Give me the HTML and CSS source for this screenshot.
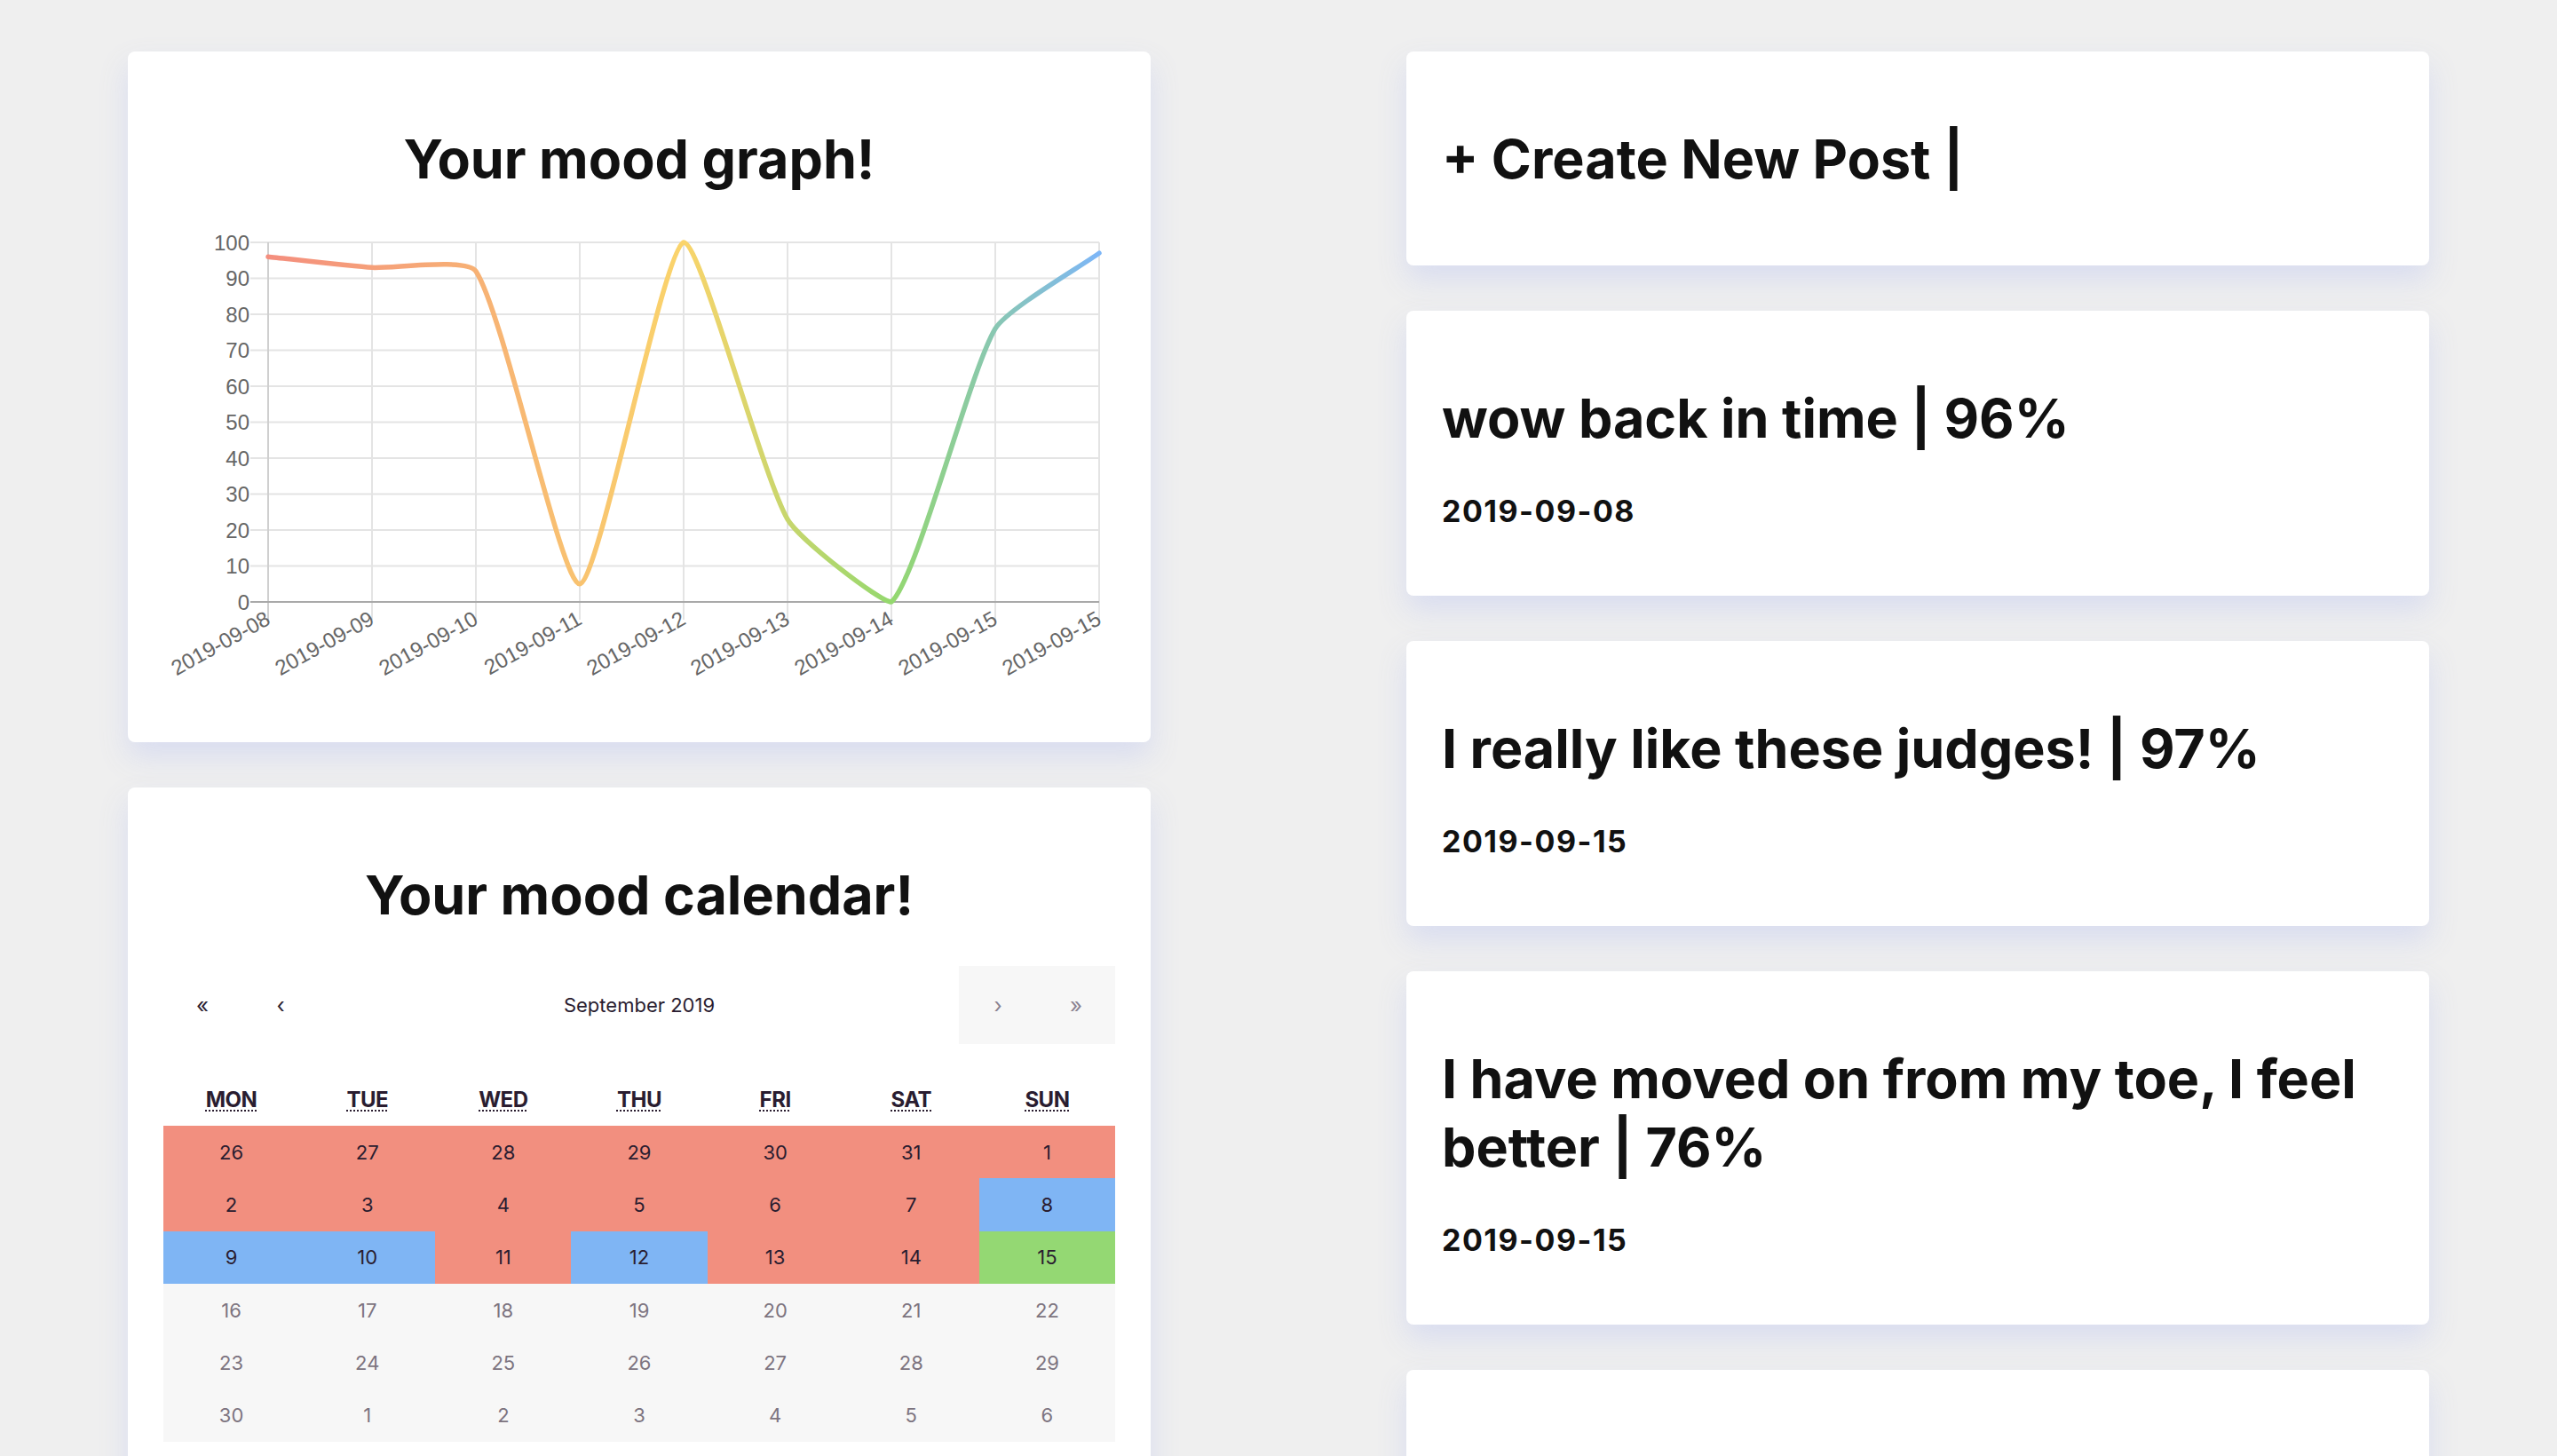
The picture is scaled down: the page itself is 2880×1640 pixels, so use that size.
FILE: index.html
```html
<!DOCTYPE html>
<html lang="en">
<head>
<meta charset="utf-8">
<title>Mood Journal</title>
<link rel="stylesheet" href="styles.css">
</head>
<body>
<main class="page">
  <section class="column">
    <div class="card chart-card">
      <h1 class="card-title centered">Your mood graph!</h1>
      <svg class="chart" width="1072" height="540" viewBox="0 0 1072 540">
        <defs>
          <linearGradient id="moodGrad" gradientUnits="userSpaceOnUse" x1="118" y1="0" x2="1054" y2="0">
            <stop offset="0" stop-color="#f48e7e"/>
            <stop offset="0.5" stop-color="#fad46b"/>
            <stop offset="0.75" stop-color="#94d86e"/>
            <stop offset="1" stop-color="#7db6f7"/>
          </linearGradient>
        </defs>
        <g class="grid">
          <line x1="98" y1="20" x2="1054" y2="20"/>
          <line x1="98" y1="60.5" x2="1054" y2="60.5"/>
          <line x1="98" y1="101" x2="1054" y2="101"/>
          <line x1="98" y1="141.5" x2="1054" y2="141.5"/>
          <line x1="98" y1="182" x2="1054" y2="182"/>
          <line x1="98" y1="222.5" x2="1054" y2="222.5"/>
          <line x1="98" y1="263" x2="1054" y2="263"/>
          <line x1="98" y1="303.5" x2="1054" y2="303.5"/>
          <line x1="98" y1="344" x2="1054" y2="344"/>
          <line x1="98" y1="384.5" x2="1054" y2="384.5"/>
          <line x1="235" y1="20" x2="235" y2="445"/>
          <line x1="352" y1="20" x2="352" y2="445"/>
          <line x1="469" y1="20" x2="469" y2="445"/>
          <line x1="586" y1="20" x2="586" y2="445"/>
          <line x1="703" y1="20" x2="703" y2="445"/>
          <line x1="820" y1="20" x2="820" y2="445"/>
          <line x1="937" y1="20" x2="937" y2="445"/>
          <line x1="1054" y1="20" x2="1054" y2="445"/>
        </g>
        <line class="axis-y" x1="118" y1="20" x2="118" y2="445"/>
        <line class="axis-zero" x1="98" y1="425" x2="1054" y2="425"/>
        <g class="y-labels">
          <text x="97" y="28.5">100</text>
          <text x="97" y="69">90</text>
          <text x="97" y="109.5">80</text>
          <text x="97" y="150">70</text>
          <text x="97" y="190.5">60</text>
          <text x="97" y="231">50</text>
          <text x="97" y="271.5">40</text>
          <text x="97" y="312">30</text>
          <text x="97" y="352.5">20</text>
          <text x="97" y="393">10</text>
          <text x="97" y="433.5">0</text>
        </g>
        <g class="x-labels">
          <text transform="translate(122 449) rotate(-29)">2019-09-08</text>
          <text transform="translate(239 449) rotate(-29)">2019-09-09</text>
          <text transform="translate(356 449) rotate(-29)">2019-09-10</text>
          <text transform="translate(473 449) rotate(-29)">2019-09-11</text>
          <text transform="translate(590 449) rotate(-29)">2019-09-12</text>
          <text transform="translate(707 449) rotate(-29)">2019-09-13</text>
          <text transform="translate(824 449) rotate(-29)">2019-09-14</text>
          <text transform="translate(941 449) rotate(-29)">2019-09-15</text>
          <text transform="translate(1058 449) rotate(-29)">2019-09-15</text>
        </g>
        <path class="mood-line" d="M118,36.2 C139.06,38.39 213.89,46.89 235,48.35 C256.01,49.8 341.9,37.02 352,52.4 C384.02,101.17 448.78,407.55 469,404.75 C490.9,401.72 562.96,27.18 586,20 C605.08,20 673.93,281.54 703,331.85 C716.05,354.44 806.85,425 820,425 C848.97,398.43 907.74,166.33 937,117.2 C949.86,95.62 1032.94,47.46 1054,32.15"/>
      </svg>
    </div>

    <div class="card calendar-card">
      <h1 class="card-title centered">Your mood calendar!</h1>
      <div class="calendar">
        <div class="cal-nav">
          <button class="nav-btn">«</button>
          <button class="nav-btn">‹</button>
          <button class="nav-label">September 2019</button>
          <button class="nav-btn disabled">›</button>
          <button class="nav-btn disabled">»</button>
        </div>
        <div class="weekdays">
          <div class="weekday"><abbr title="Monday">Mon</abbr></div>
          <div class="weekday"><abbr title="Tuesday">Tue</abbr></div>
          <div class="weekday"><abbr title="Wednesday">Wed</abbr></div>
          <div class="weekday"><abbr title="Thursday">Thu</abbr></div>
          <div class="weekday"><abbr title="Friday">Fri</abbr></div>
          <div class="weekday"><abbr title="Saturday">Sat</abbr></div>
          <div class="weekday"><abbr title="Sunday">Sun</abbr></div>
        </div>
        <div class="days">
          <div class="tile sad">26</div>
          <div class="tile sad">27</div>
          <div class="tile sad">28</div>
          <div class="tile sad">29</div>
          <div class="tile sad">30</div>
          <div class="tile sad">31</div>
          <div class="tile sad">1</div>

          <div class="tile sad">2</div>
          <div class="tile sad">3</div>
          <div class="tile sad">4</div>
          <div class="tile sad">5</div>
          <div class="tile sad">6</div>
          <div class="tile sad">7</div>
          <div class="tile calm">8</div>

          <div class="tile calm">9</div>
          <div class="tile calm">10</div>
          <div class="tile sad">11</div>
          <div class="tile calm">12</div>
          <div class="tile sad">13</div>
          <div class="tile sad">14</div>
          <div class="tile happy">15</div>

          <div class="tile off">16</div>
          <div class="tile off">17</div>
          <div class="tile off">18</div>
          <div class="tile off">19</div>
          <div class="tile off">20</div>
          <div class="tile off">21</div>
          <div class="tile off">22</div>

          <div class="tile off">23</div>
          <div class="tile off">24</div>
          <div class="tile off">25</div>
          <div class="tile off">26</div>
          <div class="tile off">27</div>
          <div class="tile off">28</div>
          <div class="tile off">29</div>

          <div class="tile off">30</div>
          <div class="tile off">1</div>
          <div class="tile off">2</div>
          <div class="tile off">3</div>
          <div class="tile off">4</div>
          <div class="tile off">5</div>
          <div class="tile off">6</div>
        </div>
      </div>
    </div>
  </section>

  <section class="column">
    <div class="card new-post">
      <h1 class="card-title">+ Create New Post |</h1>
    </div>
    <div class="card post">
      <h1 class="card-title">wow back in time | 96%</h1>
      <h3 class="post-date">2019-09-08</h3>
    </div>
    <div class="card post">
      <h1 class="card-title">I really like these judges! | 97%</h1>
      <h3 class="post-date">2019-09-15</h3>
    </div>
    <div class="card post">
      <h1 class="card-title">I have moved on from my toe, I feel better | 76%</h1>
      <h3 class="post-date">2019-09-15</h3>
    </div>
    <div class="card post placeholder"></div>
  </section>
</main>
</body>
</html>
```

FILE: styles.css
```css
* { box-sizing: border-box; }

html, body {
  margin: 0;
  background: #efefef;
}

body {
  font-family: Inter, "Noto Sans", "Liberation Sans", sans-serif;
  color: #111111;
  overflow: hidden;
}

.page {
  display: grid;
  grid-template-columns: 1152px 1152px;
  column-gap: 288px;
  padding: 58px 144px;
  align-items: start;
}

.column {
  display: flex;
  flex-direction: column;
  gap: 51px;
}

.card {
  background: #ffffff;
  border-radius: 8px;
  padding: 0 40px;
  box-shadow: 0 16px 32px rgba(214, 218, 240, 0.9);
}

.card-title {
  margin: 83px 0 0;
  font-size: 61px;
  line-height: 77px;
  font-weight: 700;
  letter-spacing: 0;
  color: #111111;
}

.card-title.centered { text-align: center; }

.new-post { padding-bottom: 81px; }

.post { padding-bottom: 76px; }

.post-date {
  margin: 47px 0 0;
  font-size: 34px;
  line-height: 38px;
  font-weight: 700;
  letter-spacing: 1.5px;
  color: #111111;
}

.placeholder { height: 320px; }

/* chart */
.chart-card { padding-bottom: 43px; }

.chart {
  display: block;
  margin-top: 35px;
}

.grid line {
  stroke: #e4e4e4;
  stroke-width: 2;
}

.axis-y {
  stroke: #cfcfcf;
  stroke-width: 2;
}

.axis-zero {
  stroke: #a9a9a9;
  stroke-width: 2;
}

.y-labels text,
.x-labels text {
  font-family: "Liberation Sans", Arial, sans-serif;
  font-size: 24px;
  fill: #666666;
  text-anchor: end;
}

.mood-line {
  fill: none;
  stroke: url(#moodGrad);
  stroke-width: 5.5;
  stroke-linecap: round;
  stroke-linejoin: round;
}

/* calendar */
.calendar-card { padding-bottom: 40px; }

.calendar {
  margin-top: 41px;
  color: #2a1d30;
}

.cal-nav {
  display: flex;
  height: 88px;
  margin-bottom: 32px;
}

.cal-nav button {
  border: 0;
  background: none;
  font-family: inherit;
  color: #2a1d30;
  padding: 0;
  margin: 0;
}

.nav-btn {
  width: 88px;
  font-size: 24px;
}

.nav-btn.disabled {
  background: #f7f7f7;
  color: #8a8290;
}

.nav-label {
  flex: 1;
  font-size: 22px;
}

.weekdays {
  display: grid;
  grid-template-columns: repeat(7, 1fr);
  height: 60px;
  align-items: center;
  text-align: center;
}

.weekday abbr {
  font-size: 24px;
  font-weight: 700;
  text-transform: uppercase;
  text-decoration: underline dotted;
  text-decoration-thickness: 2px;
  text-underline-offset: 4px;
  letter-spacing: -0.5px;
}

.days {
  display: grid;
  grid-template-columns: repeat(7, 1fr);
  grid-auto-rows: 59.33px;
}

.tile {
  display: flex;
  align-items: center;
  justify-content: center;
  font-size: 22px;
}

.tile.sad { background: #f28f7f; }
.tile.calm { background: #7fb5f4; }
.tile.happy { background: #94d873; }
.tile.off { background: #f7f7f7; color: #7d7480; }
```
